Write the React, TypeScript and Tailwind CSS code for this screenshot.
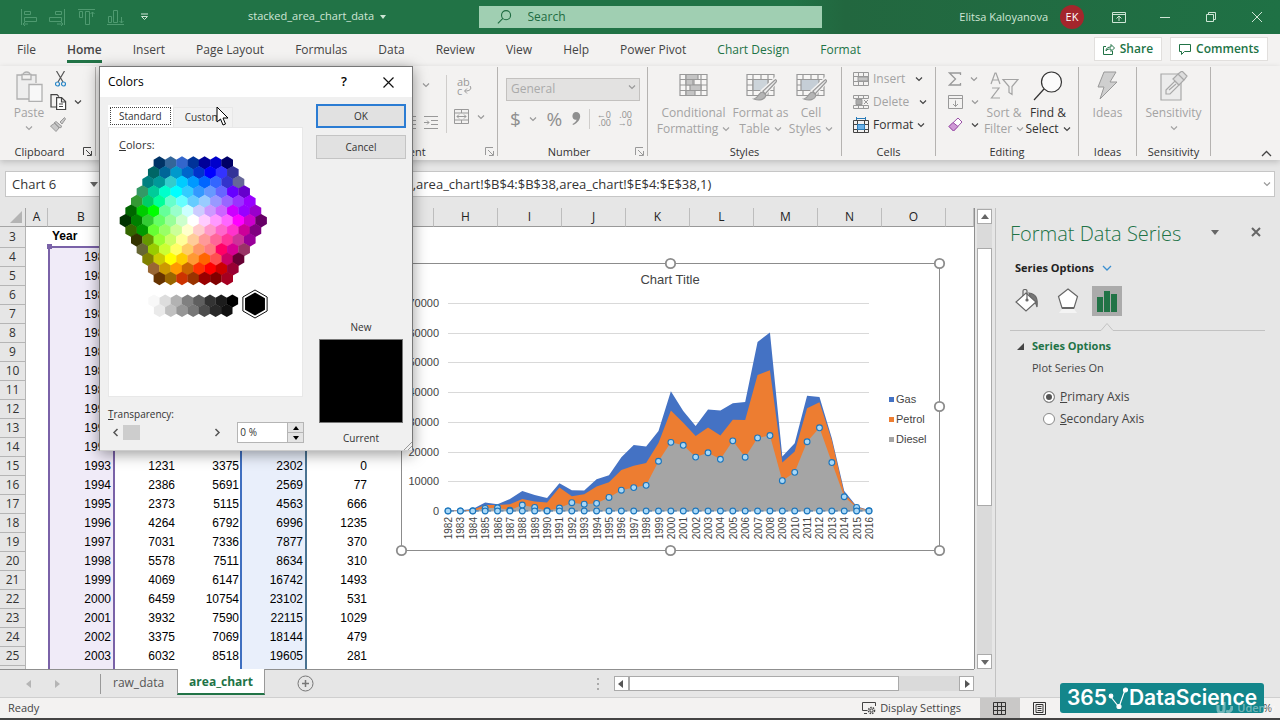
import React from "react";

// year, gas, petrol, diesel, other
const rows: (number | null)[][] = [
  [1982, 50, 50, 50, null],
  [1983, 100, 100, 50, null],
  [1984, 300, 300, 100, null],
  [1985, 900, 1100, 900, null],
  [1986, 300, 900, 1100, null],
  [1987, 1700, 2000, 300, null],
  [1988, 2700, 2000, 2000, null],
  [1989, 2200, 2000, 1200, null],
  [1990, 1500, 2800, 100, null],
  [1991, 1400, 6900, 1000, null],
  [1992, 2000, 2200, 2800, null],
  [1993, 1231, 3375, 2302, 0],
  [1994, 2386, 5691, 2569, 77],
  [1995, 2373, 5115, 4563, 666],
  [1996, 4264, 6792, 6996, 1235],
  [1997, 7031, 7336, 7877, 370],
  [1998, 5578, 7511, 8634, 310],
  [1999, 4069, 6147, 16742, 1493],
  [2000, 6459, 10754, 23102, 531],
  [2001, 3932, 7590, 22115, 1029],
  [2002, 3375, 7069, 18144, 479],
  [2003, 6032, 8518, 19605, 281],
  [2004, 8400, 8000, 17400, null],
  [2005, 5600, 7100, 23600, null],
  [2006, 6100, 12500, 18100, null],
  [2007, 11100, 21200, 24600, null],
  [2008, 12700, 22000, 25400, null],
  [2009, 2000, 6100, 10200, null],
  [2010, 2800, 7000, 13000, null],
  [2011, 4200, 11300, 23300, null],
  [2012, 1800, 8600, 28000, null],
  [2013, 800, 7400, 16300, null],
  [2014, 700, 1200, 4800, null],
  [2015, 200, 200, 1200, null],
  [2016, 100, 100, 100, null],
];

const menuTabs = ["File", "Home", "Insert", "Page Layout", "Formulas", "Data", "Review", "View", "Help", "Power Pivot", "Chart Design", "Format"];
const columns = ["A", "B", "C", "D", "E", "F", "G", "H", "I", "J", "K", "L", "M", "N", "O", ""];
const columnWidths = [
  "w-[26px]", "w-[22px]", "w-[67px]", "w-[63px]", "w-[62px]", "w-[67px]", "w-[63px]", "w-16",
  "w-16", "w-16", "w-16", "w-16", "w-16", "w-16", "w-16", "w-16", "",
];

const hexRows = [
  "003366 336699 3366CC 003399 000099 0000CC 000066",
  "006666 006699 0099CC 0066CC 0033CC 0000FF 3333FF 333399",
  "008080 009999 33CCCC 00CCFF 0099FF 0066FF 3366FF 3333CC 666699",
  "339966 00CC99 00FFCC 00FFFF 33CCFF 3399FF 6699FF 6666FF 6600FF 6600CC",
  "339933 00CC66 00FF99 66FFCC 66FFFF 66CCFF 99CCFF 9999FF 9966FF 9933FF 9900FF",
  "006600 00CC00 00FF00 66FF99 99FFCC CCFFFF CCCCFF CC99FF CC66FF CC00FF 9900FF 9900CC",
  "003300 008000 33CC33 66FF66 99FF99 CCFFCC FFFFFF FFCCFF FF99FF FF66FF FF00FF CC00CC 660066",
  "336600 009900 66FF33 99FF66 CCFF99 FFFFCC FFCCCC FF99CC FF66CC FF33CC CC0099 800080",
  "333300 669900 99FF33 CCFF66 FFFF99 FFCC99 FF9999 FF6699 FF3399 CC3399 990099",
  "666633 99CC00 CCFF33 FFFF66 FFCC66 FF9966 FF7C80 FF0066 D60093 993366",
  "808000 CCCC00 FFFF00 FFCC00 FF9933 FF6600 FF5050 CC0066 660033",
  "996633 CC9900 FF9900 CC6600 FF3300 FF0000 CC0000 990033",
  "663300 996600 CC3300 993300 990000 800000 A50021",
].map((r) => r.split(" "));
const greyRows = [
  "F8F8F8 DDDDDD B2B2B2 808080 5F5F5F 333333 1C1C1C 000000",
  "EAEAEA C0C0C0 969696 777777 4D4D4D 292929 111111",
].map((r) => r.split(" "));

const ui = "font-['Open_Sans','Noto_Sans',sans-serif]";

function Chevron({ className = "text-[#444]" }: { className?: string }) {
  return (
    <svg width="8" height="6" viewBox="0 0 8 6" fill="none" stroke="currentColor" strokeWidth="1.2" className={`shrink-0 ${className}`}>
      <path d="M1 1.5 4 4.5 7 1.5" />
    </svg>
  );
}

function Triangle({ dir }: { dir: "up" | "down" | "left" | "right" }) {
  const paths = { up: "M0 6h8L4 1z", down: "M0 2h8L4 7z", left: "M6 0v8L1 4z", right: "M2 0v8l5-4z" };
  return (
    <svg width="8" height="8" viewBox="0 0 8 8" fill="currentColor">
      <path d={paths[dir]} />
    </svg>
  );
}

function Launcher({ dark = false }: { dark?: boolean }) {
  return (
    <svg width="9" height="9" viewBox="0 0 9 9" fill="none" stroke={dark ? "#444" : "#999"} className="absolute right-[3px] bottom-0">
      <path d="M.5 8V.5H8M3 3l5 5M8.500 4v4.500H4" />
    </svg>
  );
}

function Group({ label, width, launcher, dark, children }: { label: string; width: string; launcher?: boolean; dark?: boolean; children: React.ReactNode }) {
  return (
    <section className={`relative flex h-[89px] shrink-0 flex-col border-r border-[#b5b3b1] ${width}`}>
      <div className="flex flex-1">{children}</div>
      <h2 className="h-3 text-center text-[11px] leading-4 text-[#333]">{label}</h2>
      {launcher && <Launcher dark={dark} />}
    </section>
  );
}

function BigButton({ lines, width, icon, chevron = false, dark = false }: { lines: string[]; width: string; icon: React.ReactNode; chevron?: boolean; dark?: boolean }) {
  return (
    <button className={`flex h-[72px] shrink-0 flex-col items-center pt-1 text-[12px] leading-4 whitespace-nowrap ${width} ${dark ? "text-[#333]" : "text-[#a3a3a3]"}`}>
      <span className="flex h-[34px] items-start">{icon}</span>
      {lines.map((line, i) => (
        <span key={line} className="flex items-center gap-1">
          {line}
          {chevron && i === lines.length - 1 && i > 0 && <Chevron className={dark ? "text-[#444]" : "text-[#a3a3a3]"} />}
        </span>
      ))}
      {chevron && lines.length === 1 && <Chevron className="mt-1 text-[#a3a3a3]" />}
    </button>
  );
}

function TableIcon({ brush, children }: { brush?: boolean; children?: React.ReactNode }) {
  return (
    <svg width="32" height="30" viewBox="0 0 32 30" fill="none" stroke="#999" strokeWidth="1.200">
      <path d="M2 3.500h27v21H2zM2 8.500h27M2 14h27M2 19.500h27M8 3.500v21M16 3.500v21M23 3.500v21" fill="#f7f6f5" />
      {children}
      {brush && (
        <>
          <path d="M30 8 17 20l3 3L31 11z" fill="#e4e4e4" stroke="#f3f2f1" strokeWidth="3" />
          <path d="M30 9 18 20l2 3L31 11c1-1 0-3-1-2z" fill="#eee" />
          <path d="M18 21c-5 0-4 6-9 7 5 2 11 1 12-4z" fill="#b5b5b5" />
        </>
      )}
    </svg>
  );
}

function TitleBar() {
  return (
    <header className="flex h-[34px] shrink-0 items-center bg-linear-to-r from-[#217346] from-62% via-[#22673f] via-66% to-[#1f7145] text-[12px] text-[#cfe6d6]">
      <div className="relative flex h-full w-[479px] shrink-0 items-center pl-5">
        <div className="flex w-[228px] items-center gap-3">
          <svg width="17" height="18" viewBox="0 0 17 18" fill="none" stroke="#4f9a70"><path d="M1.500 1v16M4.500 3.500h6v3h-6zM4.500 9.500h12v4h-12zM8 16H3l2-2M3 16l2 2" /></svg>
          <svg width="17" height="18" viewBox="0 0 17 18" fill="none" stroke="#4f9a70"><path d="M15.500 1v16M6.500 3.500h6v3h-6zM.5 9.500h12v4H.5zM8 16h6l-2-2M14 16l-2 2" /></svg>
          <svg width="17" height="18" viewBox="0 0 17 18" fill="none" stroke="#4f9a70"><path d="M0 1.500h17M1.500 3.500h3v6h-3zM7.500 3.500h4v13h-4zM14.500 9V4l-2 2M14.500 4l2 2" /></svg>
          <svg width="17" height="18" viewBox="0 0 17 18" fill="none" stroke="#4f9a70"><path d="M0 16.500h17M1.500 8.500h3v6h-3zM6.500 2.500h4v12h-4zM14.500 9v6l-2-2M14.500 15l2-2" /></svg>
          <svg width="9" height="8" viewBox="0 0 9 8" className="ml-1"><path d="M1 1h7" stroke="#cfe6d6" /><path d="M1.500 3.500h6l-3 3z" fill="none" stroke="#cfe6d6" /></svg>
        </div>
        <h1 className="flex items-center gap-[6px] pb-px text-[11px]">
          stacked_area_chart_data
          <svg width="6" height="4" viewBox="0 0 6 4" fill="currentColor"><path d="M0 0h6L3 4z" /></svg>
        </h1>
      </div>
      <label className="flex h-[22px] w-[343px] items-center gap-4 bg-[#a0cfb2] pl-[18px] text-[#1e6b41]">
        <svg width="16" height="16" viewBox="0 0 16 16" fill="none" stroke="currentColor" strokeWidth="1.200"><circle cx="10" cy="6" r="5" /><path d="M6.500 9.500 1 15" /></svg>
        <input aria-label="Search" placeholder="Search" className="w-full bg-transparent text-[12px] outline-none placeholder:text-[#1e6b41]" />
      </label>
      <div className="ml-auto flex items-center pr-[14px]">
        <span className="mr-3 text-[11px]">Elitsa Kaloyanova</span>
        <span className="mr-[28px] flex size-6 items-center justify-center rounded-full bg-[#a4262c] text-[11px] text-white">EK</span>
        <button aria-label="Ribbon display options" className="mr-[34px]">
          <svg width="14" height="11" viewBox="0 0 14 11" fill="none" stroke="currentColor"><path d="M.5.5h13v10H.5zM.5 2.500h13M7 9V4M4.500 6.500 7 4l2.500 2.500" /></svg>
        </button>
        <button aria-label="Minimize" className="mr-[36px]">
          <svg width="10" height="11" viewBox="0 0 10 11" stroke="currentColor"><path d="M0 5.500h10" /></svg>
        </button>
        <button aria-label="Restore" className="mr-[36px]">
          <svg width="10" height="10" viewBox="0 0 10 10" fill="none" stroke="currentColor"><path d="M.5 2.500h7v7h-7zM2.500 2.500v-2h7v7h-2" /></svg>
        </button>
        <button aria-label="Close" className="mr-1">
          <svg width="10" height="10" viewBox="0 0 10 10" stroke="currentColor"><path d="m0 0 10 10M10 0 0 10" /></svg>
        </button>
      </div>
    </header>
  );
}

function MenuTabs() {
  return (
    <nav className="flex h-8 shrink-0 items-center bg-[#f3f2f1] pr-3 pb-[2px] pl-[17px] text-[12px]">
      <div className="flex gap-[31px]">
        {menuTabs.map((tab) => (
          <a
            key={tab}
            href="#"
            className={`border-b-[3px] pt-1 leading-5 whitespace-nowrap ${
              tab === "Home" ? "border-[#217346] font-semibold text-[#333]" : "border-transparent"
            } ${tab === "Chart Design" || tab === "Format" ? "text-[#217346]" : "text-[#444]"}`}
          >
            {tab}
          </a>
        ))}
      </div>
      <div className="ml-auto flex gap-2 font-semibold text-[#217346]">
        <button className="flex h-[24px] items-center gap-[5px] border border-[#e1dfdd] bg-white px-2">
          <svg width="12" height="12" viewBox="0 0 12 12" fill="none" stroke="currentColor"><path d="M3 3.500H.5v8h9V8M3 8c0-3 2-4 5-4V1.500L11.500 5 8 8.500V6C6 6 4 6 3 8z" /></svg>
          Share
        </button>
        <button className="flex h-[24px] items-center gap-[5px] border border-[#e1dfdd] bg-white px-2">
          <svg width="12" height="12" viewBox="0 0 12 12" fill="none" stroke="currentColor"><path d="M.5 1.500h11v7H5.500l-3 3v-3h-2z" /></svg>
          Comments
        </button>
      </div>
    </nav>
  );
}

function Ribbon() {
  return (
    <div className="relative z-10 flex h-[94px] shrink-0 bg-[#f3f2f1] pt-px shadow-[0_2px_6px_rgba(0,0,0,0.18)]">
      <Group label="Clipboard" width="w-24 pr-4" launcher dark>
        <BigButton
          lines={["Paste"]}
          width="w-[58px]"
          chevron
          icon={
            <svg width="28" height="31" viewBox="0 0 28 31" fill="none" stroke="#b0b0b0" strokeWidth="1.300">
              <path d="M14 28H2V4h6c0-4 7-4 7 0h6v8" fill="#eee" />
              <path d="M7 3.500h9v5H7z" fill="#f3f2f1" />
              <path d="M14 13.500h13v17H14z" fill="#f8f8f8" />
            </svg>
          }
        />
        <div className="-ml-1 flex flex-col gap-[7px] pt-1">
          <button aria-label="Cut" className="pl-px">
            <svg width="11" height="16" viewBox="0 0 11 16" fill="none" strokeWidth="1.200"><path d="m1.500 0 6.500 11M9.500 0 3 11" stroke="#555" /><g stroke="#2b88c8"><circle cx="2.500" cy="13" r="2" /><circle cx="8.500" cy="13" r="2" /></g></svg>
          </button>
          <button aria-label="Copy" className="-ml-1 flex items-center gap-[7px]">
            <svg width="17" height="16" viewBox="0 0 17 16" fill="none" stroke="#444" strokeWidth="1.200"><path d="M6 13H1V.6h6l2 2" /><path d="M6.600 3.600h5l4 4v8h-9zM11.500 4v4h4M9 10h4M9 12.500h4" fill="#fff" /></svg>
            <Chevron />
          </button>
          <button aria-label="Format painter" className="-ml-1">
            <svg width="16" height="15" viewBox="0 0 16 15" fill="#c9c9c9" stroke="#999"><path d="M14.500.5 10 5l2 2 3.500-5zM6 4.500l6 5-2 1.500-6-5zM5 6 .5 9 6 14.500 9 11z" /></svg>
          </button>
        </div>
      </Group>
      <Group label="Alignment" width="w-[402px] pl-[206px]" launcher>
        <div className="ml-auto flex">
          <div className="mt-2 flex h-[58px] flex-col justify-between border-r border-[#cfcdcb] pr-2 pb-1 text-[#999]">
            <button aria-label="Orientation" className="flex items-center justify-end gap-2 pt-1 pr-2">
              <svg width="12" height="12" viewBox="0 0 12 12" fill="none" stroke="currentColor"><path d="m1 11 9-9M6 2h4v4" /></svg>
              <Chevron className="text-[#999]" />
            </button>
            <div className="flex gap-2">
              <button aria-label="Decrease indent"><svg width="14" height="13" viewBox="0 0 14 13" fill="none" stroke="currentColor"><path d="M0 .5h14M6 4.500h8M6 8.500h8M0 12.500h14M5 6.500H0" /></svg></button>
              <button aria-label="Increase indent"><svg width="14" height="13" viewBox="0 0 14 13" fill="none" stroke="currentColor"><path d="M0 .5h14M7 4.500h7M7 8.500h7M0 12.500h14M0 6.500h5M3 4.500l2 2-2 2" /></svg></button>
            </div>
          </div>
          <div className="flex w-[50px] flex-col items-start gap-[14px] pt-[10px] pl-[7px] text-[#999]">
            <button aria-label="Wrap text" className="relative ml-[3px] text-left text-[11px] leading-[9px]">
              ab<br />c
              <svg width="9" height="8" viewBox="0 0 9 8" fill="none" stroke="currentColor" className="absolute top-[9px] left-[6px]"><path d="M7 0c2 3 0 5-5 5M4 2.500 1.500 5 4 7.500" /></svg>
            </button>
            <button aria-label="Merge and center" className="flex items-center gap-2">
              <svg width="15" height="15" viewBox="0 0 15 15" fill="none" stroke="currentColor"><path d="M.5.5h14v14H.5zM.5 4h14M.5 11h14M7.500.5V4M7.500 11v3.500M3 7.500h9M5 5.500l-2 2 2 2M10 5.500l2 2-2 2" /></svg>
              <Chevron className="text-[#999]" />
            </button>
          </div>
        </div>
      </Group>
      <Group label="Number" width="w-[150px] pr-[15px] pl-2" launcher>
        <div className="flex w-full flex-col pt-2">
          <div className="relative -mr-2">
            <select aria-label="Number format" className="h-[23px] w-full appearance-none border border-[#c3c1bf] bg-[#e3e2e1] pl-1 text-[12px] text-[#aaa]">
              <option>General</option>
            </select>
            <Chevron className="absolute top-[9px] right-1 text-[#999]" />
          </div>
          <div className="mt-[6px] flex h-6 items-center text-[19px] leading-6 text-[#8f8f8f]">
            <button className="w-5">$</button>
            <Chevron className="mr-2 ml-1 text-[#999]" />
            <button aria-label="Percent style" className="w-5">%</button>
            <button aria-label="Comma style" className="mx-2">
              <svg width="9" height="13" viewBox="0 0 9 13" fill="currentColor"><path d="M4 0c6 0 6 9-3 13l-.5-1C3 10.500 4.500 9 4.500 7.500 2 8.500 0 6 .5 3.500.8 1.500 2 0 4 0z" /></svg>
            </button>
            <span className="mr-1 h-5 w-px bg-[#cfcdcb]" />
            <button aria-label="Increase decimal" className="mr-1 w-[18px] text-right text-[9px] leading-2">←0<br />.00</button>
            <button aria-label="Decrease decimal" className="w-[18px] text-right text-[9px] leading-2">.00<br />→0</button>
          </div>
        </div>
      </Group>
      <Group label="Styles" width="w-[194px]">
        <BigButton lines={["Conditional", "Formatting"]} width="w-[91px]" chevron icon={<TableIcon><path d="M8 3.500h12v5H8zM8 8.500h7v5.500H8zM12 14h11v5.500H12zM8 19.500h9v5H8z" fill="#c4c4c4" /></TableIcon>} />
        <BigButton lines={["Format as", "Table"]} width="w-[43px]" chevron icon={<TableIcon brush><path d="M8 8.500h15v11H8z" fill="#ccd4da" /></TableIcon>} />
        <BigButton lines={["Cell", "Styles"]} width="w-[58px]" chevron icon={<TableIcon brush><path d="M6 8.500h18v11H6z" fill="#c5ced6" /></TableIcon>} />
      </Group>
      <Group label="Cells" width="w-[94px]">
        <div className="flex flex-col pl-[11px] text-[12px] text-[#a3a3a3]">
          <button className="flex h-[23px] items-center gap-1">
            <svg width="16" height="14" viewBox="0 0 16 14" fill="none" stroke="#999"><path d="M.5.5h15v13H.5zM.5 4.500h15M.5 9.500h15M5.500.5v13M10.500.5v13" /><path d="M5 5h10v4H5z" fill="#c4c4c4" /></svg>
            Insert
            <Chevron className="ml-[6px] text-[#444]" />
          </button>
          <button className="flex h-[23px] items-center gap-1">
            <svg width="16" height="14" viewBox="0 0 16 14" fill="none" stroke="#999"><path d="M.5.5h15v3H.5zM.5 10.500h15v3H.5zM5.500.5v3M10.500.5v3M5.500 10.500v3M10.500 10.500v3" /><path d="M3 4.500h6v5H3z" fill="#aaa" /><path d="m11 5 4 4M15 5l-4 4" /></svg>
            Delete
            <Chevron className="ml-[6px] text-[#444]" />
          </button>
          <button className="flex h-[23px] items-center gap-1 text-[#333]">
            <svg width="16" height="16" viewBox="0 0 16 16" fill="none" stroke="#444"><path d="M.5 3.500h15v12H.5zM.5 7.500h15M.5 12.500h15M4.500 3.500v12M11.500 3.500v12" /><path d="M4.500 7.500h7v5h-7z" fill="#6cb2e8" stroke="#2b7cb8" /><path d="M3 1.500h10M3.500 0v3M12.500 0v3" stroke="#2b7cb8" /></svg>
            Format
            <Chevron />
          </button>
        </div>
      </Group>
      <Group label="Editing" width="w-[143px]">
        <div className="flex w-12 shrink-0 flex-col pl-3 text-[#999]">
          <button aria-label="AutoSum" className="flex h-[23px] items-center gap-2"><svg width="14" height="14" viewBox="0 0 14 14" fill="none" stroke="currentColor" strokeWidth="1.300"><path d="M12.500 3V1H1.500l6 6-6 6h11v-2" /></svg><Chevron className="text-[#999]" /></button>
          <button aria-label="Fill" className="flex h-[23px] items-center gap-2"><svg width="15" height="14" viewBox="0 0 15 14" fill="none" stroke="currentColor"><path d="M.5.5h14v13H.5zM.5 3.500h14M7.500 5.500v6M5 9l2.500 2.500L10 9" /></svg><Chevron className="text-[#999]" /></button>
          <button aria-label="Clear" className="flex h-[23px] items-center gap-2"><svg width="15" height="15" viewBox="0 0 15 15" fill="#fff" stroke="#9b4fa8"><path d="m10 1 4 4-8.500 9L1 9.500z" /><path d="m5 5.500 5 4-4.500 4.500L1 9.500z" fill="#cf9ad6" /></svg><Chevron /></button>
        </div>
        <BigButton lines={["Sort &", "Filter"]} width="w-10" chevron icon={<svg width="29" height="29" viewBox="0 0 29 29" fill="none" stroke="#a3a3a3" strokeWidth="1.200"><path d="m1 13 4-11h1l4 11M2.500 9h6M2 17h7L1.500 27H10M13 8.500h15l-6 7v8l-3-2v-6z" /></svg>} />
        <BigButton lines={["Find &", "Select"]} width="w-12" chevron dark icon={<svg width="30" height="31" viewBox="0 0 30 31" fill="#fbfbfb" stroke="#333" strokeWidth="1.200"><circle cx="18.500" cy="11" r="10" /><path d="M11 18 1 29" /></svg>} />
      </Group>
      <Group label="Ideas" width="w-[58px]">
        <BigButton lines={["Ideas"]} width="w-full" icon={<svg width="21" height="29" viewBox="0 0 21 29" fill="#cfcfcf" stroke="#999"><path d="M7 1h12l-6 10h7L3 28l4-12H1z" /></svg>} />
      </Group>
      <Group label="Sensitivity" width="w-[74px]">
        <BigButton lines={["Sensitivity"]} width="w-full" chevron icon={<svg width="28" height="30" viewBox="0 0 28 30" fill="#ececec" stroke="#a8a8a8" strokeWidth="1.200"><path d="M1 3h20v26H1z" /><path d="m6 19 9-9 4 4-9 9-4 0zM9 19l7-6" /><path d="m13 8 5-5 6 6-5 5zM18 3l4-3 5 5-3 4z" fill="#ddd" /></svg>} />
      </Group>
      <button aria-label="Collapse ribbon" className="mt-auto ml-auto pr-2 pb-[3px]">
        <svg width="11" height="7" viewBox="0 0 11 7" fill="none" stroke="#444" strokeWidth="1.300"><path d="m1 6 4.500-4.500L10 6" /></svg>
      </button>
    </div>
  );
}

function FormulaBar() {
  return (
    <div className="flex h-12 shrink-0 gap-[26px] bg-[#e6e6e6] pt-[11px] pr-[5px] pb-[11px] pl-[5px]">
      <div className="relative w-[97px] shrink-0">
        <input aria-label="Name box" defaultValue="Chart 6" className="h-[26px] w-full border border-[#c6c6c6] bg-white pl-[6px] text-[13px] text-[#333]" />
        <span className="absolute top-[9px] right-1 text-[#666]"><Triangle dir="down" /></span>
      </div>
      <div className="relative flex-1">
        <input
          aria-label="Formula bar"
          defaultValue="=SERIES(area_chart!$E$3,area_chart!$B$4:$B$38,area_chart!$E$4:$E$38,1)"
          className="h-[26px] w-full border border-[#c6c6c6] bg-white pl-[135px] text-[13px] text-[#333]"
        />
        <Chevron className="absolute top-[10px] right-1 text-[#999]" />
      </div>
    </div>
  );
}

const X0 = 47;
const Y0 = 248;
const px = (i: number) => X0 + (i * 421) / 34;
const py = (v: number) => Y0 - (v * 208) / 70000;

function AreaChart() {
  const tops = [
    rows.map((r) => Number(r[1]) + Number(r[2]) + Number(r[3])),
    rows.map((r) => Number(r[2]) + Number(r[3])),
    rows.map((r) => Number(r[3])),
  ];
  const fills = ["#4472c4", "#ed7d31", "#a5a5a5"];
  const handles = [[0, 0], [269, 0], [538, 0], [0, 143], [538, 143], [0, 287], [269, 287], [538, 287]];
  return (
    <svg viewBox="0 0 538 287" width="538" height="287" className="absolute top-[55px] left-[401px] overflow-visible font-['Liberation_Sans',sans-serif]" fill="#444">
      <rect x=".5" y=".5" width="538" height="287" fill="#fff" stroke="#8c8c8c" />
      <text x="269" y="21" textAnchor="middle" fontSize="13">Chart Title</text>
      {[0, 1, 2, 3, 4, 5, 6, 7].map((n) => (
        <g key={n}>
          <path d={`M${X0} ${Math.round(py(n * 10000)) + 0.5}H468`} stroke="#d9d9d9" />
          <text x="38" y={py(n * 10000) + 4} textAnchor="end" fontSize="11">{n * 10000}</text>
        </g>
      ))}
      {tops.map((t, s) => (
        <path key={s} d={`M${X0} ${Y0}${t.map((v, i) => `L${px(i)} ${py(v)}`).join("")}L468 ${Y0}z`} fill={fills[s]} />
      ))}
      <path d={`M${X0} ${Y0}H468`} stroke="#2e75b6" strokeDasharray="6 6.380" />
      {rows.map((r, i) => (
        <g key={i} fill="#a9d8f7" stroke="#1b75bc" strokeWidth="1.100">
          <circle cx={px(i)} cy={py(Number(r[3]))} r="2.900" />
          <circle cx={px(i)} cy={Y0} r="2.900" />
        </g>
      ))}
      {rows.map((r, i) => (
        <text key={i} transform={`translate(${px(i) + 4} 254) rotate(-90)`} textAnchor="end" fontSize="10">{r[0]}</text>
      ))}
      {["Gas", "Petrol", "Diesel"].map((name, i) => (
        <g key={name}>
          <rect x="488" y={134 + i * 20} width="5" height="5" fill={fills[i]} />
          <text x="495" y={140 + i * 20} fontSize="11">{name}</text>
        </g>
      ))}
      {handles.map(([x, y]) => (
        <circle key={`${x}-${y}`} cx={x + 0.5} cy={y + 0.5} r="4.700" fill="#fff" stroke="#8c8c8c" strokeWidth="1.800" />
      ))}
    </svg>
  );
}

function Sheet() {
  return (
    <div className="relative flex-1 overflow-hidden border-r border-[#8f8f8f] bg-white">
      <table className="w-full table-fixed border-separate border-spacing-0">
        <colgroup>
          {columnWidths.map((w, i) => <col key={i} className={w} />)}
        </colgroup>
        <thead>
          <tr className="h-[19px] bg-[#e6e6e6] text-[12px] text-[#222]">
            <td className="border-r border-b border-[#a5a5a5] p-0">
              <svg width="12" height="12" viewBox="0 0 12 12" className="mr-[3px] ml-auto"><path d="M12 0v12H0z" fill="#b4b4b4" /></svg>
            </td>
            {columns.map((c, i) => (
              <th key={i} className="border-r border-b border-r-[#bdbdbd] border-b-[#999] p-0 leading-[18px] font-normal">{c}</th>
            ))}
          </tr>
        </thead>
        <tbody className="font-['Liberation_Sans',sans-serif] text-[12px] leading-[19px] text-black">
          <tr className="h-[21px]">
            <th className={`border-r border-b border-[#b5b5b5] bg-[#e6e6e6] p-0 leading-5 font-normal text-[#333] ${ui}`}>3</th>
            <td className="p-0" />
            <th className="border-b-2 border-[#7a62a8] p-0 pl-1 text-left leading-[19px] font-bold">Year</th>
          </tr>
          {rows.slice(0, 22).map((r, i) => (
            <tr key={i} className="h-[19px] text-right">
              <th className={`border-r border-b border-[#b5b5b5] bg-[#e6e6e6] p-0 text-center leading-[18px] font-normal text-[#333] ${ui}`}>{i + 4}</th>
              <td className="p-0" />
              <td className="border-x-2 border-[#7a62a8] bg-[#f0ebf8] p-0 pr-[2px]">{r[0]}</td>
              <td className="p-0 pr-[3px]">{r[1]}</td>
              <td className="p-0 pr-px">{r[2]}</td>
              <td className="border-x-2 border-r-[#4a7392] border-l-[#3f6fc0] bg-[#e9effb] p-0 pr-[2px]">{r[3]}</td>
              <td className="p-0 pr-[3px]">{r[4]}</td>
            </tr>
          ))}
          <tr className="h-[19px]">
            <td className="border-r border-[#b5b5b5] bg-[#e6e6e6]" />
            <td />
            <td className="border-x-2 border-[#7a62a8] bg-[#f0ebf8]" />
            <td />
            <td />
            <td className="border-x-2 border-r-[#4a7392] border-l-[#3f6fc0] bg-[#e9effb]" />
          </tr>
        </tbody>
      </table>
      <span className="absolute top-9 left-[47px] size-[5px] bg-[#7a62a8]" />
      <AreaChart />
    </div>
  );
}

function SheetTabs() {
  return (
    <footer className="flex h-7 shrink-0 items-start bg-[#e6e6e6] text-[12px] text-[#555]">
      <div className="flex h-full flex-1 items-start border-t border-[#8f8f8f]">
        <div className="mt-1 flex h-5 w-[101px] items-center gap-5 border-r border-[#999] pl-[25px] text-[#b5b5b5]">
          <button aria-label="Previous sheet"><Triangle dir="left" /></button>
          <button aria-label="Next sheet"><Triangle dir="right" /></button>
        </div>
        <button className="h-[26px] px-3">raw_data</button>
        <button className="-mt-px ml-px h-[26px] border-x border-b-[2px] border-x-[#999] border-b-[#217346] bg-white px-[11px] pt-px font-bold text-[#217346]">area_chart</button>
        <button aria-label="New sheet" className="mt-[5px] ml-8">
          <svg width="17" height="17" viewBox="0 0 17 17" fill="none" stroke="#777"><circle cx="8.500" cy="8.500" r="7.500" /><path d="M8.500 5v7M5 8.500h7" strokeWidth="1.500" /></svg>
        </button>
        <span className="mt-2 mr-[15px] ml-auto flex flex-col gap-[3px]">
          <i className="size-[2px] bg-[#aaa]" />
          <i className="size-[2px] bg-[#aaa]" />
          <i className="size-[2px] bg-[#aaa]" />
        </span>
        <div className="mt-[6px] flex h-[15px] w-[37%] bg-[#dadada] text-[#555]">
          <button aria-label="Scroll left" className="flex w-[15px] items-center justify-center border border-[#aaa] bg-white"><Triangle dir="left" /></button>
          <div className="w-3/4 border border-[#aaa] bg-white" />
          <button aria-label="Scroll right" className="ml-auto flex w-[15px] items-center justify-center border border-[#aaa] bg-white"><Triangle dir="right" /></button>
        </div>
      </div>
      <div className="w-[21px]" />
    </footer>
  );
}

function FormatPanel() {
  return (
    <aside className="flex w-[285px] shrink-0 flex-col border-l border-[#c2c2c2] bg-[#e6e6e6] pr-[15px] pl-[14px] text-[12px] text-[#444]">
      <div className="flex h-12 items-center">
        <h2 className="flex-1 pt-1 text-[20px] leading-6 font-light whitespace-nowrap text-[#217346]">Format Data Series</h2>
        <button aria-label="Pane options" className="mr-8 text-[#666]"><Triangle dir="down" /></button>
        <button aria-label="Close pane" className="mr-1 text-[#666]">
          <svg width="10" height="10" viewBox="0 0 10 10" stroke="currentColor" strokeWidth="2"><path d="m1 1 8 8M9 1 1 9" /></svg>
        </button>
      </div>
      <button className="flex h-6 items-center gap-2 pl-[5px] text-[11px] font-bold text-[#222]">
        Series Options
        <svg width="10" height="7" viewBox="0 0 10 7" fill="none" stroke="#3b8fd0" strokeWidth="1.300"><path d="m1 1 4 4 4-4" /></svg>
      </button>
      <div className="mt-[6px] flex items-center pl-1">
        <button aria-label="Fill and line" className="mr-[15px] p-px">
          <svg width="25" height="24" viewBox="0 0 25 24" fill="#fff" stroke="#666" strokeWidth="1.200"><path d="M14 4c7 1 9 5 8 14-1-4-2-5-5-6z" fill="#777" /><path d="M11 4 21 13 11 22 1 13z" /><path d="M8 7V2c0-2 4-2 4 0v9" fill="none" /><circle cx="12" cy="11" r="1" fill="#666" /></svg>
        </button>
        <button aria-label="Effects" className="mr-3 p-px">
          <svg width="22" height="26" viewBox="0 0 22 26" fill="#fff" stroke="#666" strokeWidth="1.200"><path d="M5 21h12l3 4H2z" fill="#f4f4f4" stroke="none" /><path d="m11 1 9.500 7.500L17 20H5L1.500 8.500z" /><path d="M5 20h12" strokeWidth="2" /></svg>
        </button>
        <button aria-label="Series options" className="flex size-[30px] items-center justify-center bg-[#ababab]">
          <svg width="20" height="22" viewBox="0 0 20 22" fill="#217346"><path d="M0 7h6v15H0zM7 1h6v21H7zM14 4h6v18h-6z" /></svg>
        </button>
      </div>
      <div className="mt-[6px] flex">
        <span className="mt-2 h-px w-[91px] bg-[#c2c2c2]" />
        <svg width="12" height="9" viewBox="0 0 12 9" fill="none" stroke="#c2c2c2"><path d="m0 8.500 6-7 6 7" /></svg>
        <span className="mt-2 h-px flex-1 bg-[#c2c2c2]" />
      </div>
      <button className="mt-1 flex h-[22px] items-center gap-2 pl-[7px] text-[11px] font-bold text-[#217346]">
        <svg width="7" height="7" viewBox="0 0 7 7" fill="#444"><path d="M7 0v7H0z" /></svg>
        Series Options
      </button>
      <fieldset className="pl-[22px]">
        <legend className="mb-[7px] text-[11px] leading-[22px]">Plot Series On</legend>
        <label className="flex h-[22px] items-center gap-[5px] pl-[11px]">
          <input type="radio" name="axis" defaultChecked className="size-3 appearance-none rounded-full border border-[#8a8a8a] bg-white checked:bg-[#555] checked:shadow-[inset_0_0_0_2px_white]" />
          <span><u>P</u>rimary Axis</span>
        </label>
        <label className="flex h-[22px] items-center gap-[5px] pl-[11px]">
          <input type="radio" name="axis" className="size-3 appearance-none rounded-full border border-[#8a8a8a] bg-white checked:bg-[#555] checked:shadow-[inset_0_0_0_2px_white]" />
          <span><u>S</u>econdary Axis</span>
        </label>
      </fieldset>
    </aside>
  );
}

function StatusBar() {
  return (
    <div className="relative flex h-[23px] shrink-0 items-center border-t border-b-2 border-t-[#cfcfcf] border-b-[#444] bg-[#f3f2f1] pl-2 text-[11px] text-[#444]">
      <span>Ready</span>
      <button className="mr-[19px] ml-auto flex items-center gap-1">
        <svg width="14" height="13" viewBox="0 0 14 13" fill="none" stroke="#444"><path d="M13.500 4V.5H.5v8h5M2 11.500h3" /><circle cx="9.500" cy="8.500" r="3" strokeWidth="1.500" strokeDasharray="1.500 1" /><circle cx="9.500" cy="8.500" r="1.500" /></svg>
        Display Settings
      </button>
      <button aria-label="Normal view" className="flex h-full w-10 items-center justify-center bg-[#c9c8c7]">
        <svg width="13" height="13" viewBox="0 0 13 13" fill="none" stroke="#333"><path d="M.5.5h12v12H.5zM.5 4.500h12M.5 8.500h12M4.500.5v12M8.500.5v12" /></svg>
      </button>
      <button aria-label="Page layout view" className="flex w-10 items-center justify-center">
        <svg width="13" height="13" viewBox="0 0 13 13" fill="none" stroke="#333"><path d="M.5.5h12v12H.5zM3 2.500h7v8H3zM4.500 4.500h4M4.500 6.500h4M4.500 8.500h4" /></svg>
      </button>
      <span className="w-[203px]" />
      <span className="mr-2 text-right">%</span>
      {/* brand badge over the status bar */}
      <div className="absolute right-4 bottom-[5px] flex h-[30px] w-[204px] items-center justify-center rounded-[3px] bg-[#13868b] font-['Inter',sans-serif] text-[21px] font-semibold text-white">
        365
        <svg width="22" height="24" viewBox="0 0 22 24" fill="#fff" stroke="#fff" strokeWidth="1.200"><path d="m4 11 8 10L18 4" fill="none" /><circle cx="4" cy="10" r="1.800" /><circle cx="12" cy="20.500" r="2" /><circle cx="18.500" cy="4" r="2" /></svg>
        DataScience
      </div>
      <span className="absolute right-[5px] bottom-[2px] flex items-center gap-1 text-[11px] font-semibold text-white/40">
        <svg width="17" height="14" viewBox="0 0 17 14" fill="none" stroke="currentColor" strokeWidth="3"><path d="M2 4v4c0 5 6 5 6 0V1M10 10c4 2 6-1 6-5" /></svg>
        Udemy
      </span>
    </div>
  );
}

const hex = (cx: number, cy: number, r: number) => {
  const w = r * 0.866;
  return `M${cx} ${cy - r}l${w} ${r / 2}v${r}l${-w} ${r / 2}l${-w} ${-r / 2}v${-r}z`;
};

function ColorWheel() {
  return (
    <svg width="160" height="170" viewBox="0 0 160 170" role="img" aria-label="Color honeycomb" className="ml-2">
      {hexRows.map((row, y) =>
        row.map((c, x) => <path key={`${y}-${x}`} d={hex(76.3 - ((row.length - 1) / 2 - x) * 11.3, 9 + y * 9.62, 6.7)} fill={`#${c}`} />)
      )}
      {greyRows.map((row, y) =>
        row.map((c, x) => <path key={`g${y}-${x}`} d={hex(37 + y * 5.6 + x * 11.2, 147 + y * 9.5, 6.6)} fill={`#${c}`} />)
      )}
      <path d={hex(138, 150, 14)} fill="#fff" stroke="#111" />
      <path d={hex(138, 150, 11.5)} fill="#000" />
    </svg>
  );
}

function ColorsDialog() {
  return (
    <div role="dialog" aria-label="Colors" className="absolute top-[66px] left-[99px] z-20 flex h-[385px] w-[314px] flex-col border border-[#777] border-b-[#ccc] bg-[#f0f0f0] text-[10px] text-[#333] shadow-[0_3px_14px_rgba(0,0,0,0.4)]">
      <div className="flex h-[30px] shrink-0 items-center bg-white pl-2 text-[12px] text-black">
        <span className="flex-1">Colors</span>
        <button aria-label="Help" className="mr-9 text-[13px] font-semibold">?</button>
        <button aria-label="Close dialog" className="mr-[18px]">
          <svg width="11" height="11" viewBox="0 0 11 11" stroke="#111" strokeWidth="1.200"><path d="m.5.5 10 10M10.500.5l-10 10" /></svg>
        </button>
      </div>
      <div className="flex flex-1">
        <div className="flex w-[204px] flex-col pt-2 pl-2">
          <div role="tablist" className="flex h-[22px] items-end">
            <button role="tab" className="h-[22px] bg-white p-[2px]">
              <span className="flex h-[18px] items-center border border-dotted border-[#444] px-2">Standard</span>
            </button>
            <button role="tab" className="h-5 border border-b-0 border-[#e8e8e8] bg-[#f2f2f2] px-[11px]">Custom</button>
          </div>
          <div className="flex h-[270px] w-[195px] flex-col border border-[#e8e8e8] bg-white pt-2">
            <span className="pl-[10px] text-[11px] leading-[18px]"><u>C</u>olors:</span>
            <ColorWheel />
          </div>
          <label htmlFor="transparency" className="mt-[9px] leading-4"><u>T</u>ransparency:</label>
          <div className="flex items-center">
            <div className="flex w-[118px] items-center">
              <button aria-label="Less" className="w-[15px]"><svg width="7" height="9" viewBox="0 0 7 9" fill="none" stroke="#555" strokeWidth="1.500" className="mx-auto"><path d="M5.500 1 2 4.500 5.500 8" /></svg></button>
              <input
                id="transparency"
                type="range"
                defaultValue={0}
                className="h-[15px] w-[87px] appearance-none bg-[#f0f0f0] [&::-webkit-slider-thumb]:h-[15px] [&::-webkit-slider-thumb]:w-[17px] [&::-webkit-slider-thumb]:appearance-none [&::-webkit-slider-thumb]:bg-[#cdcdcd]"
              />
              <button aria-label="More" className="w-[15px]"><svg width="7" height="9" viewBox="0 0 7 9" fill="none" stroke="#555" strokeWidth="1.500" className="mx-auto"><path d="M1.500 1 5 4.500 1.500 8" /></svg></button>
            </div>
            <div className="ml-3 flex h-[21px] w-[67px] border border-[#b5b5b5] bg-white">
              <input aria-label="Transparency percent" defaultValue="0 %" className="w-[49px] pl-[2px]" />
              <div className="flex flex-1 flex-col bg-[#e4e4e4] text-black">
                <button aria-label="Increase" className="flex flex-1 items-center justify-center border-b border-l border-[#b5b5b5]"><svg width="6" height="4" viewBox="0 0 6 4"><path d="M0 4h6L3 0z" /></svg></button>
                <button aria-label="Decrease" className="flex flex-1 items-center justify-center border-l border-[#b5b5b5]"><svg width="6" height="4" viewBox="0 0 6 4"><path d="M0 0h6L3 4z" /></svg></button>
              </div>
            </div>
          </div>
        </div>
        <div className="flex flex-1 flex-col items-center pt-[7px] pr-[6px] pl-3">
          <button className="h-6 w-full border-2 border-[#2b7cd3] bg-[#e1e1e1]">OK</button>
          <button className="mt-[7px] h-6 w-full border border-[#c4c4c4] bg-[#e1e1e1]">Cancel</button>
          <span className="mt-[159px] leading-[18px]">New</span>
          <span className="my-[3px] size-[84px] border border-[#777] bg-black" />
          <span className="mt-[3px] leading-[18px]">Current</span>
        </div>
      </div>
      <svg width="10" height="10" viewBox="0 0 10 10" stroke="#999" className="absolute right-0 bottom-0"><path d="m2 10 8-8M6 10l4-4" /></svg>
    </div>
  );
}

export default function App() {
  return (
    <div className={`relative flex h-screen flex-col overflow-hidden bg-[#e6e6e6] ${ui}`}>
      <TitleBar />
      <MenuTabs />
      <Ribbon />
      <FormulaBar />
      <main className="flex min-h-0 flex-1">
        <div className="flex min-w-0 flex-1 flex-col">
          <div className="flex min-h-0 flex-1">
            <Sheet />
            <div className="mr-[3px] ml-[2px] flex w-[15px] flex-col bg-[#dadada] pt-px text-[#666]">
              <button aria-label="Scroll up" className="flex h-[15px] items-center justify-center border border-[#aaa] bg-white"><Triangle dir="up" /></button>
              <div className="mt-6 h-[56%] border border-[#aaa] bg-white" />
              <button aria-label="Scroll down" className="mt-auto flex h-[15px] items-center justify-center border border-[#aaa] bg-white"><Triangle dir="down" /></button>
            </div>
          </div>
          <SheetTabs />
        </div>
        <FormatPanel />
      </main>
      <StatusBar />
      <ColorsDialog />
      {/* mouse pointer */}
      <svg width="13" height="20" viewBox="0 0 13 20" className="absolute top-[106px] left-[216px] z-30">
        <path d="M1 1v15l3.500-3 2.500 6 2.500-1-2.500-6h5z" fill="#fff" stroke="#000" />
      </svg>
    </div>
  );
}
